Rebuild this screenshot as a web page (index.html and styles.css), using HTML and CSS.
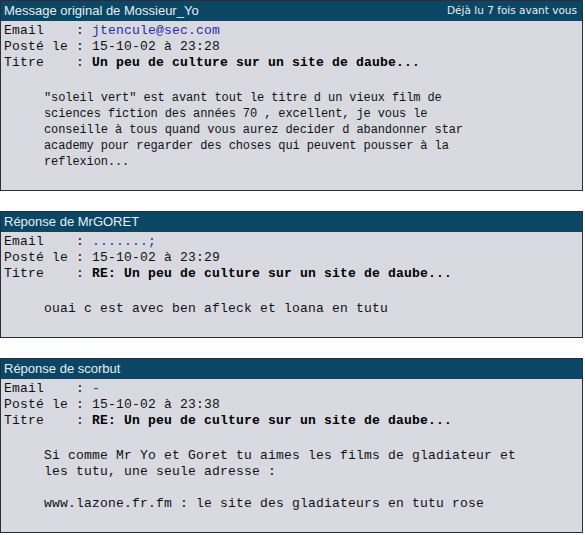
FILE: index.html
```html
<!DOCTYPE html>
<html lang="fr">
<head>
<meta charset="utf-8">
<title>Forum</title>
<link rel="stylesheet" href="styles.css">
</head>
<body>
<div class="page">
  <div class="box">
    <div class="head">
      <span class="title">Message original de Mossieur_Yo</span>
      <span class="reads">Déjà lu 7 fois avant vous</span>
    </div>
    <div class="body">
      <div class="meta">
        <div class="row"><span class="label">Email    : </span><span class="link">jtencule@sec.com</span></div>
        <div class="row"><span class="label">Posté le : </span><span>15-10-02 à 23:28</span></div>
        <div class="row"><span class="label">Titre    : </span><b class="subject">Un peu de culture sur un site de daube...</b></div>
      </div>
      <div class="msg small">
        <p>"soleil vert" est avant tout le titre d un vieux film de<br>sciences fiction des années 70 , excellent, je vous le<br>conseille à tous quand vous aurez decider d abandonner star<br>academy pour regarder des choses qui peuvent pousser à la<br>reflexion...</p>
      </div>
    </div>
  </div>

  <div class="box">
    <div class="head">
      <span class="title">Réponse de MrGORET</span>
    </div>
    <div class="body">
      <div class="meta">
        <div class="row"><span class="label">Email    : </span><span class="link">.......;</span></div>
        <div class="row"><span class="label">Posté le : </span><span>15-10-02 à 23:29</span></div>
        <div class="row"><span class="label">Titre    : </span><b class="subject">RE: Un peu de culture sur un site de daube...</b></div>
      </div>
      <div class="msg">
        <p>ouai c est avec ben afleck et loana en tutu</p>
      </div>
    </div>
  </div>

  <div class="box">
    <div class="head">
      <span class="title">Réponse de scorbut</span>
    </div>
    <div class="body">
      <div class="meta">
        <div class="row"><span class="label">Email    : </span><span class="link">-</span></div>
        <div class="row"><span class="label">Posté le : </span><span>15-10-02 à 23:38</span></div>
        <div class="row"><span class="label">Titre    : </span><b class="subject">RE: Un peu de culture sur un site de daube...</b></div>
      </div>
      <div class="msg">
        <p>Si comme Mr Yo et Goret tu aimes les films de gladiateur et<br>les tutu, une seule adresse :</p>
        <p>www.lazone.fr.fm : le site des gladiateurs en tutu rose</p>
      </div>
    </div>
  </div>
</div>
</body>
</html>
```

FILE: styles.css
```css
html, body {
  margin: 0;
  padding: 0;
  background: #ffffff;
}

.page {
  width: 583px;
  display: flex;
  flex-direction: column;
  gap: 20px;
}

.box {
  border: 1px solid #26303a;
  background: #d8d9e1;
}

.head {
  display: flex;
  justify-content: space-between;
  align-items: center;
  height: 19px;
  padding: 0 5px 0 3px;
  background: #0b4764;
  color: #e6eef4;
  border-bottom: 1px solid #0b4764;
}

.title {
  font-family: "Liberation Sans", Arial, sans-serif;
  font-size: 13px;
  line-height: 19px;
}

.reads {
  font-family: "DejaVu Sans", Verdana, sans-serif;
  font-size: 10.5px;
  line-height: 19px;
}

.body {
  padding: 2px 3px 20px 3px;
  font-family: "Liberation Mono", "Courier New", monospace;
  font-size: 13px;
  line-height: 16px;
  letter-spacing: 0.2px;
  color: #111111;
}

.row {
  white-space: pre;
}

.link {
  color: #2c2ca8;
}

.subject {
  font-weight: bold;
  color: #000000;
}

.msg {
  margin: 19px 0 0 40px;
}

.msg p {
  margin: 0;
}

.msg p + p {
  margin-top: 16px;
}

.msg.small {
  font-size: 12px;
  letter-spacing: -0.1px;
}
```
